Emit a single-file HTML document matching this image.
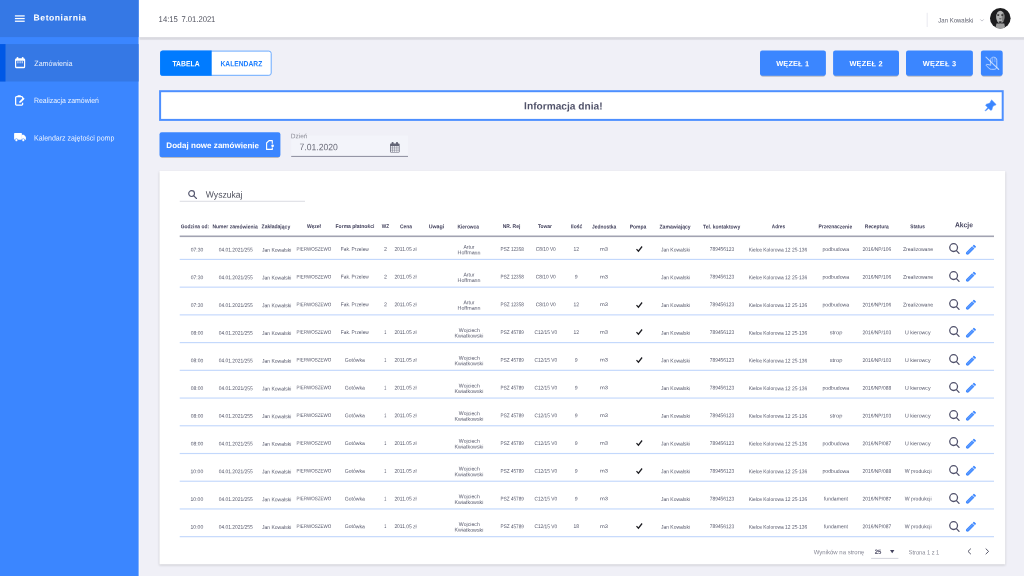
<!DOCTYPE html>
<html lang="pl">
<head>
<meta charset="utf-8">
<title>Betoniarnia</title>
<style>
*{box-sizing:border-box;margin:0;padding:0}
html,body{width:1024px;height:576px;overflow:hidden;background:#f0f0f7;font-family:"Liberation Sans",sans-serif}
.a{position:absolute}
.t{position:absolute;left:0;top:0;white-space:pre;line-height:1;transform-origin:0 0;font-family:"Liberation Sans",sans-serif}
svg{position:absolute;overflow:visible}
</style>
</head>
<body>
<!-- base geometry, drawn in SVG so fractional edges anti-alias like the (downscaled) reference -->
<svg style="left:0;top:0" width="1024" height="576" viewBox="0 0 1024 576">
  <defs>
    <linearGradient id="hs" x1="0" y1="0" x2="0" y2="1">
      <stop offset="0" stop-color="#000" stop-opacity=".105"/>
      <stop offset=".6" stop-color="#000" stop-opacity=".09"/>
      <stop offset="1" stop-color="#000" stop-opacity="0"/>
    </linearGradient>
    <filter id="sb" x="-10%" y="-30%" width="120%" height="170%"><feGaussianBlur stdDeviation="0.7"/></filter>
    <filter id="cb" x="-5%" y="-5%" width="110%" height="110%"><feGaussianBlur stdDeviation="0.8"/></filter>
  </defs>
  <!-- header + shadow -->
  <rect x="138.6" y="37.1" width="885.4" height="3.500" fill="url(#hs)"/>
  <rect x="138.6" y="0" width="885.4" height="37.1" fill="#fff"/>
  <!-- sidebar -->
  <rect x="138.6" y="37.1" width="1.500" height="538.9" fill="#fff" opacity=".35"/>
  <rect x="0" y="0" width="138.6" height="576" fill="#3b86ff"/>
  <rect x="0" y="0" width="138.6" height="37.1" fill="#3578e5"/>
  <rect x="0" y="44.1" width="138.6" height="37.4" fill="#3578e5"/>
  <rect x="0" y="44.1" width="5.500" height="37.4" fill="#0058e6"/>
  <!-- hamburger -->
  <rect x="14.9" y="15.3" width="9.800" height="1.250" fill="#fff"/>
  <rect x="14.9" y="17.950" width="9.800" height="1.250" fill="#fff"/>
  <rect x="14.9" y="20.600" width="9.800" height="1.250" fill="#fff"/>
  <!-- header divider -->
  <rect x="926.700" y="12.800" width=".9" height="14.200" fill="#e6e6ee"/>
  <!-- toggle -->
  <rect x="160.600" y="51.100" width="110.600" height="24.200" rx="2.300" fill="#fff" stroke="#6aaaff" stroke-width="1"/>
  <path d="M162.700 50.600h49v25.200h-49a2.600 2.600 0 0 1-2.600-2.600v-20a2.600 2.600 0 0 1 2.600-2.600z" fill="#007bff"/>
  <!-- wezel buttons (+ soft shadows) -->
  <g filter="url(#sb)" fill="#000" opacity=".22">
    <rect x="760.800" y="54" width="64.300" height="22.700" rx="2"/>
    <rect x="833.900" y="54" width="64.300" height="22.700" rx="2"/>
    <rect x="906.800" y="54" width="65.300" height="22.700" rx="2"/>
    <rect x="981.700" y="54" width="20.200" height="22.700" rx="2"/>
    <rect x="160.300" y="136" width="119.300" height="22" rx="2"/>
  </g>
  <g fill="#3b86ff">
    <rect x="760" y="50.600" width="65.900" height="25.200" rx="2.200"/>
    <rect x="833.100" y="50.600" width="65.900" height="25.200" rx="2.200"/>
    <rect x="906" y="50.600" width="66.900" height="25.200" rx="2.200"/>
    <rect x="980.900" y="50.600" width="21.800" height="25.200" rx="2.200"/>
    <rect x="159.500" y="132.300" width="120.900" height="24.800" rx="2.200"/>
  </g>
  <!-- banner -->
  <rect x="160.100" y="91.200" width="842.600" height="28.700" fill="#fff" stroke="#4d8fff" stroke-width="2"/>
  <!-- date field -->
  <rect x="291.200" y="135.600" width="116.800" height="20.400" fill="#f3f4fa"/>
  <rect x="291.200" y="155.900" width="116.800" height="1" fill="#8b8c9d"/>
  <!-- card -->
  <rect x="159.200" y="171.800" width="846.200" height="393.600" fill="#000" opacity=".15" filter="url(#cb)"/>
  <rect x="159.500" y="170.900" width="845.700" height="393.400" fill="#fff"/>
  <!-- search underline -->
  <rect x="179.700" y="200.800" width="125.300" height=".9" fill="#d6d7df"/>
  <!-- table head line -->
  <rect x="179.700" y="235.500" width="814.300" height="1.600" fill="#a2a3b2"/>
  <rect x="179.700" y="258.85" width="814.300" height="1.150" fill="#c3d8fc"/>
  <rect x="179.700" y="286.58" width="814.300" height="1.150" fill="#c3d8fc"/>
  <rect x="179.700" y="314.30" width="814.300" height="1.150" fill="#c3d8fc"/>
  <rect x="179.700" y="342.03" width="814.300" height="1.150" fill="#c3d8fc"/>
  <rect x="179.700" y="369.75" width="814.300" height="1.150" fill="#c3d8fc"/>
  <rect x="179.700" y="397.48" width="814.300" height="1.150" fill="#c3d8fc"/>
  <rect x="179.700" y="425.20" width="814.300" height="1.150" fill="#c3d8fc"/>
  <rect x="179.700" y="452.93" width="814.300" height="1.150" fill="#c3d8fc"/>
  <rect x="179.700" y="480.65" width="814.300" height="1.150" fill="#c3d8fc"/>
  <rect x="179.700" y="508.38" width="814.300" height="1.150" fill="#c3d8fc"/>
  <rect x="179.700" y="536.10" width="814.300" height="1.150" fill="#c3d8fc"/>
  <!-- footer select underline -->
  <rect x="871.100" y="557.900" width="27.300" height=".9" fill="#cfd0d9"/>
</svg>

<!-- sidebar icons -->
<svg style="left:14.8px;top:57.2px" width="10.2" height="11.2" viewBox="0 0 20 22">
  <path d="M3 2.600h14a3 3 0 0 1 3 3v13.400a3 3 0 0 1-3 3H3a3 3 0 0 1-3-3V5.600a3 3 0 0 1 3-3z" fill="#fff"/>
  <rect x="2.300" y="7.200" width="15.400" height="12" rx=".6" fill="#3578e5"/>
  <rect x="3.400" y="0" width="3" height="5" rx="1.200" fill="#fff"/>
  <rect x="13.600" y="0" width="3" height="5" rx="1.200" fill="#fff"/>
  <rect x="4.600" y="8.200" width="2.300" height="4.200" fill="#fff" opacity=".75"/>
  <rect x="8.850" y="8.200" width="2.300" height="4.200" fill="#fff" opacity=".75"/>
  <rect x="13.100" y="8.200" width="2.300" height="4.200" fill="#fff" opacity=".75"/>
</svg>
<svg style="left:14.8px;top:94.9px" width="10" height="10.8" viewBox="0 0 20 21.6">
  <path d="M15.2 7.4V5.200a1.800 1.800 0 0 0-1.800-1.800H3.100a1.800 1.800 0 0 0-1.800 1.800v13.300a1.800 1.800 0 0 0 1.800 1.800h10.300a1.800 1.800 0 0 0 1.800-1.800v-3" fill="none" stroke="#fff" stroke-width="2.500"/>
  <rect x="4.800" y="0.400" width="7" height="3.800" rx="1.200" fill="#fff"/>
  <path d="M8.400 15.800l.8-3.400 7.400-7.400 2.700 2.700-7.400 7.400z" fill="#fff"/>
</svg>
<svg style="left:13.9px;top:133.300px" width="12" height="8.800" viewBox="0 0 24 17.600">
  <rect x="0.200" y="0" width="15.600" height="13.400" rx="1.400" fill="#fff"/>
  <path d="M15.800 3.400h4.200l3.800 4.400v5.600h-8z" fill="#fff"/>
  <circle cx="4.800" cy="14.200" r="2.900" fill="#fff" stroke="#3b86ff" stroke-width="1.100"/>
  <circle cx="18.600" cy="14.200" r="2.900" fill="#fff" stroke="#3b86ff" stroke-width="1.100"/>
</svg>

<!-- header right -->
<svg style="left:979.6px;top:19.1px" width="4" height="2.6" viewBox="0 0 8 5.2"><path d="M.6.8L4 4.2 7.4.8" fill="none" stroke="#a4a5b3" stroke-width="1.3"/></svg>
<svg style="left:990.4px;top:8.2px" width="20.6" height="20.6" viewBox="0 0 41.2 41.2">
  <defs><clipPath id="av"><circle cx="20.6" cy="20.6" r="20.6"/></clipPath>
  <filter id="bl" x="-30%" y="-30%" width="160%" height="160%"><feGaussianBlur stdDeviation="1.250"/></filter></defs>
  <circle cx="20.6" cy="20.6" r="20.6" fill="#1d1d1f"/>
  <g clip-path="url(#av)"><g filter="url(#bl)">
    <path d="M13 31h15.500l2.500 12H10z" fill="#9c9c9c"/>
    <ellipse cx="20.600" cy="18" rx="8.300" ry="12.600" fill="#b2b2b2"/>
    <ellipse cx="26.200" cy="19" rx="2.600" ry="9" fill="#6a6a6a" opacity=".7"/>
    <ellipse cx="16.400" cy="14.200" rx="2.400" ry="1.600" fill="#2c2c2c"/>
    <ellipse cx="24.400" cy="14.200" rx="2.400" ry="1.600" fill="#2c2c2c"/>
    <ellipse cx="20.600" cy="21.600" rx="2.600" ry="1.400" fill="#6d6d6d"/>
    <ellipse cx="20.600" cy="28.200" rx="3.400" ry="1.700" fill="#2a2a2a"/>
  </g></g>
</svg>

<!-- hand icon -->
<svg style="left:0;top:0" width="1024" height="576" viewBox="0 0 1024 576" fill="none" stroke="#fff" stroke-linecap="round" stroke-linejoin="round">
  <g opacity=".62" stroke-width="1">
    <path d="M990.700 64.300V59.600c0-1.500 1.200-2.400 2.700-2.400h.4c1.700 0 3 1.300 3 3V66.800c0 1.600-1.100 2.500-2.700 2.500h-2.800c-.9 0-1.600-.3-2.300-1l-2.700-2.600c-.6-.7-.1-1.500.8-1.300l3.600 .7"/>
    <path d="M992.700 58v3.800M994.900 58.200v3.600" opacity=".55"/>
  </g>
  <path d="M986 57.100L998.800 69.500" stroke-width="1.050" opacity=".66"/>
</svg>
<!-- pin -->
<svg style="left:0;top:0" width="1024" height="576" viewBox="0 0 1024 576"><path d="M991.67 100.10 L996.00 104.43 L994.90 105.54 L990.56 101.20zM991.15 101.79 L994.31 104.95 L992.51 107.12 L991.92 109.47 L991.24 110.26 L990.67 110.28 L985.82 105.43 L985.84 104.86 L986.63 104.18 L988.98 103.59zM987.88 107.48 L988.62 108.22 L985.57 110.90 L985.20 110.53z" fill="#3b86ff" stroke="#3b86ff" stroke-width=".6" stroke-linejoin="round"/></svg>
<!-- file icon -->
<svg style="left:265.9px;top:140.1px" width="7.8" height="10" viewBox="0 0 15.600 20" fill="none" stroke="#fff" stroke-width="2.200" stroke-linejoin="round">
  <path d="M12.600 7.600V1.200H6L1.200 6v12.800h11.400v-3.600"/>
  <circle cx="13.200" cy="11.600" r="2.700" fill="#fff" stroke="none"/>
</svg>
<!-- date calendar icon -->
<svg style="left:390.4px;top:141.800px" width="9.600" height="10.600" viewBox="0 0 19.200 21.200">
  <rect x="0" y="3" width="19.200" height="18.200" rx="2" fill="#646576"/>
  <rect x="3.200" y="0" width="4" height="6" rx="1.600" fill="#646576"/>
  <rect x="12" y="0" width="4" height="6" rx="1.600" fill="#646576"/>
  <g fill="#f4f5fa"><rect x="1.50" y="8.20" width="3.450" height="3.300"/><rect x="5.75" y="8.20" width="3.450" height="3.300"/><rect x="10.00" y="8.20" width="3.450" height="3.300"/><rect x="14.25" y="8.20" width="3.450" height="3.300"/><rect x="1.50" y="12.40" width="3.450" height="3.300"/><rect x="5.75" y="12.40" width="3.450" height="3.300"/><rect x="10.00" y="12.40" width="3.450" height="3.300"/><rect x="14.25" y="12.40" width="3.450" height="3.300"/><rect x="1.50" y="16.60" width="3.450" height="3.300"/><rect x="5.75" y="16.60" width="3.450" height="3.300"/><rect x="10.00" y="16.60" width="3.450" height="3.300"/><rect x="14.25" y="16.60" width="3.450" height="3.300"/></g>
</svg>
<!-- search -->
<svg style="left:188.2px;top:189.9px" width="9.2" height="9.2" viewBox="0 0 18.400 18.400" fill="none" stroke="#55576f" stroke-width="2.300" stroke-linecap="round"><circle cx="7.200" cy="7.200" r="5.800"/><path d="M11.600 11.600l5.400 5.400"/></svg>
<svg style="left:949.4px;top:243.30px" width="11" height="11.4" viewBox="0 0 22.4 23.2" fill="none" stroke="#50516b" stroke-width="2.600" stroke-linecap="round"><circle cx="9.4" cy="9.4" r="7.9"/><path d="M15.2 15.4l5.300 5.700"/></svg>
<svg style="left:965.3px;top:244.60px" width="10.6" height="10.8" viewBox="0 0 21.2 21.6"><g transform="translate(10.6 10.8) rotate(45)"><rect x="-3.2" y="-13.4" width="6.4" height="3.600" rx="1.200" fill="#3b86ff"/><path d="M-3.200 -8.600h6.400v16.400c0 1.800-1.400 3.300-3.200 3.300s-3.200-1.500-3.200-3.300z" fill="#3b86ff"/><path d="M-1 -8.600v17M1 -8.600v17" stroke="#9cc2ff" stroke-width=".7" fill="none"/></g></svg>
<svg style="left:949.4px;top:271.03px" width="11" height="11.4" viewBox="0 0 22.4 23.2" fill="none" stroke="#50516b" stroke-width="2.600" stroke-linecap="round"><circle cx="9.4" cy="9.4" r="7.9"/><path d="M15.2 15.4l5.300 5.700"/></svg>
<svg style="left:965.3px;top:272.33px" width="10.6" height="10.8" viewBox="0 0 21.2 21.6"><g transform="translate(10.6 10.8) rotate(45)"><rect x="-3.2" y="-13.4" width="6.4" height="3.600" rx="1.200" fill="#3b86ff"/><path d="M-3.200 -8.600h6.400v16.400c0 1.800-1.400 3.300-3.200 3.300s-3.200-1.500-3.200-3.300z" fill="#3b86ff"/><path d="M-1 -8.600v17M1 -8.600v17" stroke="#9cc2ff" stroke-width=".7" fill="none"/></g></svg>
<svg style="left:949.4px;top:298.75px" width="11" height="11.4" viewBox="0 0 22.4 23.2" fill="none" stroke="#50516b" stroke-width="2.600" stroke-linecap="round"><circle cx="9.4" cy="9.4" r="7.9"/><path d="M15.2 15.4l5.300 5.700"/></svg>
<svg style="left:965.3px;top:300.05px" width="10.6" height="10.8" viewBox="0 0 21.2 21.6"><g transform="translate(10.6 10.8) rotate(45)"><rect x="-3.2" y="-13.4" width="6.4" height="3.600" rx="1.200" fill="#3b86ff"/><path d="M-3.200 -8.600h6.400v16.400c0 1.800-1.400 3.300-3.200 3.300s-3.200-1.500-3.200-3.300z" fill="#3b86ff"/><path d="M-1 -8.600v17M1 -8.600v17" stroke="#9cc2ff" stroke-width=".7" fill="none"/></g></svg>
<svg style="left:949.4px;top:326.48px" width="11" height="11.4" viewBox="0 0 22.4 23.2" fill="none" stroke="#50516b" stroke-width="2.600" stroke-linecap="round"><circle cx="9.4" cy="9.4" r="7.9"/><path d="M15.2 15.4l5.300 5.700"/></svg>
<svg style="left:965.3px;top:327.78px" width="10.6" height="10.8" viewBox="0 0 21.2 21.6"><g transform="translate(10.6 10.8) rotate(45)"><rect x="-3.2" y="-13.4" width="6.4" height="3.600" rx="1.200" fill="#3b86ff"/><path d="M-3.200 -8.600h6.400v16.400c0 1.800-1.400 3.300-3.200 3.300s-3.200-1.500-3.200-3.300z" fill="#3b86ff"/><path d="M-1 -8.600v17M1 -8.600v17" stroke="#9cc2ff" stroke-width=".7" fill="none"/></g></svg>
<svg style="left:949.4px;top:354.20px" width="11" height="11.4" viewBox="0 0 22.4 23.2" fill="none" stroke="#50516b" stroke-width="2.600" stroke-linecap="round"><circle cx="9.4" cy="9.4" r="7.9"/><path d="M15.2 15.4l5.300 5.700"/></svg>
<svg style="left:965.3px;top:355.50px" width="10.6" height="10.8" viewBox="0 0 21.2 21.6"><g transform="translate(10.6 10.8) rotate(45)"><rect x="-3.2" y="-13.4" width="6.4" height="3.600" rx="1.200" fill="#3b86ff"/><path d="M-3.200 -8.600h6.400v16.400c0 1.800-1.400 3.300-3.200 3.300s-3.200-1.500-3.200-3.300z" fill="#3b86ff"/><path d="M-1 -8.600v17M1 -8.600v17" stroke="#9cc2ff" stroke-width=".7" fill="none"/></g></svg>
<svg style="left:949.4px;top:381.93px" width="11" height="11.4" viewBox="0 0 22.4 23.2" fill="none" stroke="#50516b" stroke-width="2.600" stroke-linecap="round"><circle cx="9.4" cy="9.4" r="7.9"/><path d="M15.2 15.4l5.300 5.700"/></svg>
<svg style="left:965.3px;top:383.23px" width="10.6" height="10.8" viewBox="0 0 21.2 21.6"><g transform="translate(10.6 10.8) rotate(45)"><rect x="-3.2" y="-13.4" width="6.4" height="3.600" rx="1.200" fill="#3b86ff"/><path d="M-3.200 -8.600h6.400v16.400c0 1.800-1.400 3.300-3.200 3.300s-3.200-1.500-3.200-3.300z" fill="#3b86ff"/><path d="M-1 -8.600v17M1 -8.600v17" stroke="#9cc2ff" stroke-width=".7" fill="none"/></g></svg>
<svg style="left:949.4px;top:409.65px" width="11" height="11.4" viewBox="0 0 22.4 23.2" fill="none" stroke="#50516b" stroke-width="2.600" stroke-linecap="round"><circle cx="9.4" cy="9.4" r="7.9"/><path d="M15.2 15.4l5.300 5.700"/></svg>
<svg style="left:965.3px;top:410.95px" width="10.6" height="10.8" viewBox="0 0 21.2 21.6"><g transform="translate(10.6 10.8) rotate(45)"><rect x="-3.2" y="-13.4" width="6.4" height="3.600" rx="1.200" fill="#3b86ff"/><path d="M-3.200 -8.600h6.400v16.400c0 1.800-1.400 3.300-3.200 3.300s-3.200-1.500-3.200-3.300z" fill="#3b86ff"/><path d="M-1 -8.600v17M1 -8.600v17" stroke="#9cc2ff" stroke-width=".7" fill="none"/></g></svg>
<svg style="left:949.4px;top:437.38px" width="11" height="11.4" viewBox="0 0 22.4 23.2" fill="none" stroke="#50516b" stroke-width="2.600" stroke-linecap="round"><circle cx="9.4" cy="9.4" r="7.9"/><path d="M15.2 15.4l5.300 5.700"/></svg>
<svg style="left:965.3px;top:438.68px" width="10.6" height="10.8" viewBox="0 0 21.2 21.6"><g transform="translate(10.6 10.8) rotate(45)"><rect x="-3.2" y="-13.4" width="6.4" height="3.600" rx="1.200" fill="#3b86ff"/><path d="M-3.200 -8.600h6.400v16.400c0 1.800-1.400 3.300-3.200 3.300s-3.200-1.500-3.200-3.300z" fill="#3b86ff"/><path d="M-1 -8.600v17M1 -8.600v17" stroke="#9cc2ff" stroke-width=".7" fill="none"/></g></svg>
<svg style="left:949.4px;top:465.10px" width="11" height="11.4" viewBox="0 0 22.4 23.2" fill="none" stroke="#50516b" stroke-width="2.600" stroke-linecap="round"><circle cx="9.4" cy="9.4" r="7.9"/><path d="M15.2 15.4l5.300 5.700"/></svg>
<svg style="left:965.3px;top:466.40px" width="10.6" height="10.8" viewBox="0 0 21.2 21.6"><g transform="translate(10.6 10.8) rotate(45)"><rect x="-3.2" y="-13.4" width="6.4" height="3.600" rx="1.200" fill="#3b86ff"/><path d="M-3.200 -8.600h6.400v16.400c0 1.800-1.400 3.300-3.200 3.300s-3.200-1.500-3.200-3.300z" fill="#3b86ff"/><path d="M-1 -8.600v17M1 -8.600v17" stroke="#9cc2ff" stroke-width=".7" fill="none"/></g></svg>
<svg style="left:949.4px;top:492.83px" width="11" height="11.4" viewBox="0 0 22.4 23.2" fill="none" stroke="#50516b" stroke-width="2.600" stroke-linecap="round"><circle cx="9.4" cy="9.4" r="7.9"/><path d="M15.2 15.4l5.300 5.700"/></svg>
<svg style="left:965.3px;top:494.13px" width="10.6" height="10.8" viewBox="0 0 21.2 21.6"><g transform="translate(10.6 10.8) rotate(45)"><rect x="-3.2" y="-13.4" width="6.4" height="3.600" rx="1.200" fill="#3b86ff"/><path d="M-3.200 -8.600h6.400v16.400c0 1.800-1.400 3.300-3.200 3.300s-3.200-1.500-3.200-3.300z" fill="#3b86ff"/><path d="M-1 -8.600v17M1 -8.600v17" stroke="#9cc2ff" stroke-width=".7" fill="none"/></g></svg>
<svg style="left:949.4px;top:520.55px" width="11" height="11.4" viewBox="0 0 22.4 23.2" fill="none" stroke="#50516b" stroke-width="2.600" stroke-linecap="round"><circle cx="9.4" cy="9.4" r="7.9"/><path d="M15.2 15.4l5.300 5.700"/></svg>
<svg style="left:965.3px;top:521.85px" width="10.6" height="10.8" viewBox="0 0 21.2 21.6"><g transform="translate(10.6 10.8) rotate(45)"><rect x="-3.2" y="-13.4" width="6.4" height="3.600" rx="1.200" fill="#3b86ff"/><path d="M-3.200 -8.600h6.400v16.400c0 1.800-1.400 3.300-3.200 3.300s-3.200-1.500-3.200-3.300z" fill="#3b86ff"/><path d="M-1 -8.600v17M1 -8.600v17" stroke="#9cc2ff" stroke-width=".7" fill="none"/></g></svg>
<svg style="left:635.7px;top:246.10px" width="6.600" height="5.900" viewBox="0 0 13.200 11.800"><path d="M1 6.400l3.800 4L12.200 1" fill="none" stroke="#1d1d22" stroke-width="2.500"/></svg>
<svg style="left:635.7px;top:301.55px" width="6.600" height="5.900" viewBox="0 0 13.200 11.800"><path d="M1 6.400l3.800 4L12.200 1" fill="none" stroke="#1d1d22" stroke-width="2.500"/></svg>
<svg style="left:635.7px;top:329.27px" width="6.600" height="5.900" viewBox="0 0 13.200 11.800"><path d="M1 6.400l3.800 4L12.200 1" fill="none" stroke="#1d1d22" stroke-width="2.500"/></svg>
<svg style="left:635.7px;top:357.00px" width="6.600" height="5.900" viewBox="0 0 13.200 11.800"><path d="M1 6.400l3.800 4L12.200 1" fill="none" stroke="#1d1d22" stroke-width="2.500"/></svg>
<svg style="left:635.7px;top:440.18px" width="6.600" height="5.900" viewBox="0 0 13.200 11.800"><path d="M1 6.400l3.800 4L12.200 1" fill="none" stroke="#1d1d22" stroke-width="2.500"/></svg>
<svg style="left:635.7px;top:467.90px" width="6.600" height="5.900" viewBox="0 0 13.200 11.800"><path d="M1 6.400l3.800 4L12.200 1" fill="none" stroke="#1d1d22" stroke-width="2.500"/></svg>
<svg style="left:635.7px;top:523.35px" width="6.600" height="5.900" viewBox="0 0 13.200 11.800"><path d="M1 6.400l3.800 4L12.200 1" fill="none" stroke="#1d1d22" stroke-width="2.500"/></svg>
<!-- footer -->
<svg style="left:890.2px;top:550.100px" width="4.400" height="3.400" viewBox="0 0 9.200 6.800"><path d="M0 0h9.200L4.600 6.800z" fill="#43425d"/></svg>
<svg style="left:966.8px;top:548.4px" width="4.600" height="6.800" viewBox="0 0 9.200 13.600"><path d="M7.800 1.200L2 6.800l5.800 5.600" fill="none" stroke="#555668" stroke-width="2"/></svg>
<svg style="left:985.400px;top:548.4px" width="4.600" height="6.800" viewBox="0 0 9.200 13.600"><path d="M1.400 1.200l5.800 5.600-5.800 5.600" fill="none" stroke="#555668" stroke-width="2"/></svg>

<div class="a" id="tl" style="left:0;top:0;width:1024px;height:576px;will-change:transform;filter:blur(.3px)">
<span class="t" style="font-size:8.6px;font-weight:700;color:#ffffff;letter-spacing:0.524px;transform:translate(33.62px,13.51px) rotate(0.1deg) ;">Betoniarnia</span>
<span class="t" style="font-size:7.6px;font-weight:400;color:#ffffff;transform:translate(34.38px,59.96px) rotate(0.1deg) scaleX(0.9285);opacity:0.9;">Zamówienia</span>
<span class="t" style="font-size:7.6px;font-weight:400;color:#ffffff;transform:translate(34.03px,96.96px) rotate(0.1deg) scaleX(0.9097);opacity:0.9;">Realizacja zamówień</span>
<span class="t" style="font-size:7.6px;font-weight:400;color:#ffffff;transform:translate(34.02px,134.46px) rotate(0.1deg) scaleX(0.9241);opacity:0.9;">Kalendarz zajętości pomp</span>
<span class="t" style="font-size:8.3px;font-weight:400;color:#4d4f5c;transform:translate(158.62px,15.01px) rotate(0.1deg) scaleX(0.9249);">14:15</span>
<span class="t" style="font-size:8.3px;font-weight:400;color:#4d4f5c;transform:translate(181.51px,15.01px) rotate(0.1deg) scaleX(0.9171);">7.01.2021</span>
<span class="t" style="font-size:6.5px;font-weight:400;color:#5e606e;transform:translate(938.31px,17.57px) rotate(0.1deg) scaleX(0.9252);">Jan Kowalski</span>
<span class="t" style="font-size:7.6px;font-weight:700;color:#ffffff;transform:translate(172.42px,60.16px) rotate(0.1deg) scaleX(0.8982);">TABELA</span>
<span class="t" style="font-size:7.6px;font-weight:700;color:#1a7dff;transform:translate(220.45px,60.16px) rotate(0.1deg) scaleX(0.8856);">KALENDARZ</span>
<span class="t" style="font-size:7.4px;font-weight:700;color:#ffffff;letter-spacing:0.114px;transform:translate(776.29px,60.09px) rotate(0.1deg) ;">WĘZEŁ 1</span>
<span class="t" style="font-size:7.4px;font-weight:700;color:#ffffff;letter-spacing:0.195px;transform:translate(849.39px,60.09px) rotate(0.1deg) ;">WĘZEŁ 2</span>
<span class="t" style="font-size:7.4px;font-weight:700;color:#ffffff;letter-spacing:0.224px;transform:translate(922.79px,60.09px) rotate(0.1deg) ;">WĘZEŁ 3</span>
<span class="t" style="font-size:10.2px;font-weight:700;color:#51536a;transform:translate(524.12px,101.37px) rotate(0.1deg) scaleX(0.9970);">Informacja dnia!</span>
<span class="t" style="font-size:8px;font-weight:700;color:#ffffff;letter-spacing:0.035px;transform:translate(166.36px,142.00px) rotate(0.1deg) ;">Dodaj nowe zamówienie</span>
<span class="t" style="font-size:6.6px;font-weight:400;color:#8e8e99;transform:translate(290.77px,133.31px) rotate(0.1deg) scaleX(0.9873);">Dzień</span>
<span class="t" style="font-size:9.2px;font-weight:400;color:#6a6b78;transform:translate(299.56px,143.12px) rotate(0.1deg) scaleX(0.9365);">7.01.2020</span>
<span class="t" style="font-size:9.2px;font-weight:400;color:#4d4f5c;transform:translate(205.86px,190.62px) rotate(0.1deg) scaleX(0.9333);">Wyszukaj</span>
<span class="t" style="font-size:5.4px;font-weight:700;color:#43425d;transform:translate(180.80px,224.14px) rotate(0.1deg) scaleX(0.9074);">Godzina od:</span>
<span class="t" style="font-size:5.4px;font-weight:700;color:#43425d;transform:translate(212.46px,224.34px) rotate(0.1deg) scaleX(0.9275);">Numer zamówienia</span>
<span class="t" style="font-size:5.4px;font-weight:700;color:#43425d;transform:translate(261.55px,224.34px) rotate(0.1deg) scaleX(0.9379);">Zakładający</span>
<span class="t" style="font-size:5.4px;font-weight:700;color:#43425d;transform:translate(306.90px,223.89px) rotate(0.1deg) scaleX(0.9190);">Węzeł</span>
<span class="t" style="font-size:5.4px;font-weight:700;color:#43425d;transform:translate(335.56px,223.89px) rotate(0.1deg) scaleX(0.9316);">Forma płatności</span>
<span class="t" style="font-size:5.4px;font-weight:700;color:#43425d;transform:translate(381.70px,223.89px) rotate(0.1deg) scaleX(0.8749);">WZ</span>
<span class="t" style="font-size:5.4px;font-weight:700;color:#43425d;transform:translate(400.00px,224.34px) rotate(0.1deg) scaleX(0.9000);">Cena</span>
<span class="t" style="font-size:5.4px;font-weight:700;color:#43425d;transform:translate(428.68px,224.34px) rotate(0.1deg) scaleX(0.9823);">Uwagi</span>
<span class="t" style="font-size:5.4px;font-weight:700;color:#43425d;transform:translate(457.48px,224.54px) rotate(0.1deg) scaleX(0.8967);">Kierowca</span>
<span class="t" style="font-size:5.4px;font-weight:700;color:#43425d;transform:translate(502.67px,223.89px) rotate(0.1deg) scaleX(0.9224);">NR. Rej</span>
<span class="t" style="font-size:5.4px;font-weight:700;color:#43425d;transform:translate(537.95px,223.89px) rotate(0.1deg) scaleX(0.9060);">Towar</span>
<span class="t" style="font-size:5.4px;font-weight:700;color:#43425d;transform:translate(570.97px,224.34px) rotate(0.1deg) scaleX(0.9255);">Ilość</span>
<span class="t" style="font-size:5.4px;font-weight:700;color:#43425d;transform:translate(592.13px,224.54px) rotate(0.1deg) scaleX(0.9052);">Jednostka</span>
<span class="t" style="font-size:5.4px;font-weight:700;color:#43425d;transform:translate(629.67px,224.54px) rotate(0.1deg) scaleX(0.9231);">Pompa</span>
<span class="t" style="font-size:5.4px;font-weight:700;color:#43425d;transform:translate(659.55px,224.54px) rotate(0.1deg) scaleX(0.9342);">Zamawiający</span>
<span class="t" style="font-size:5.4px;font-weight:700;color:#43425d;transform:translate(703.04px,224.54px) rotate(0.1deg) scaleX(0.9310);">Tel. kontaktowy</span>
<span class="t" style="font-size:5.4px;font-weight:700;color:#43425d;transform:translate(771.78px,224.34px) rotate(0.1deg) scaleX(0.8643);">Adres</span>
<span class="t" style="font-size:5.4px;font-weight:700;color:#43425d;transform:translate(818.47px,224.34px) rotate(0.1deg) scaleX(0.9143);">Przeznaczenie</span>
<span class="t" style="font-size:5.4px;font-weight:700;color:#43425d;transform:translate(864.87px,224.34px) rotate(0.1deg) scaleX(0.9060);">Receptura</span>
<span class="t" style="font-size:5.4px;font-weight:700;color:#43425d;transform:translate(910.36px,224.34px) rotate(0.1deg) scaleX(0.8816);">Status</span>
<span class="t" style="font-size:7.2px;font-weight:700;color:#43425d;transform:translate(955.03px,221.32px) rotate(0.1deg) scaleX(0.9327);">Akcje</span>
<span class="t" style="font-size:5.3px;font-weight:400;color:#55576a;transform:translate(190.76px,247.45px) rotate(0.1deg) scaleX(0.9415);">07:30</span>
<span class="t" style="font-size:5.3px;font-weight:400;color:#55576a;transform:translate(218.71px,247.45px) rotate(0.1deg) scaleX(0.9231);">04.01.2021/255</span>
<span class="t" style="font-size:5.3px;font-weight:400;color:#55576a;transform:translate(261.92px,247.75px) rotate(0.1deg) scaleX(0.9514);">Jan Kowalski</span>
<span class="t" style="font-size:5.2px;font-weight:400;color:#55576a;transform:translate(296.43px,246.67px) rotate(0.1deg) scaleX(0.8704);">PIERWOSZEWO</span>
<span class="t" style="font-size:5.3px;font-weight:400;color:#55576a;transform:translate(340.70px,246.85px) rotate(0.1deg) scaleX(0.9204);">Fak. Przelew</span>
<span class="t" style="font-size:5.3px;font-weight:400;color:#55576a;transform:translate(383.94px,246.85px) rotate(0.1deg) scaleX(0.9917);">2</span>
<span class="t" style="font-size:5.3px;font-weight:400;color:#55576a;transform:translate(394.40px,246.85px) rotate(0.1deg) scaleX(0.9216);">2011.05 zł</span>
<span class="t" style="font-size:5.3px;font-weight:400;color:#55576a;transform:translate(463.39px,244.75px) rotate(0.1deg) scaleX(0.9661);">Artur</span>
<span class="t" style="font-size:5.3px;font-weight:400;color:#55576a;transform:translate(457.56px,250.35px) rotate(0.1deg) scaleX(1.0047);">Hoffmann</span>
<span class="t" style="font-size:5.3px;font-weight:400;color:#55576a;transform:translate(500.57px,246.85px) rotate(0.1deg) scaleX(0.8781);">PSZ 12358</span>
<span class="t" style="font-size:5.3px;font-weight:400;color:#55576a;transform:translate(535.81px,246.85px) rotate(0.1deg) scaleX(0.9020);">C8/10 V0</span>
<span class="t" style="font-size:5.3px;font-weight:400;color:#55576a;transform:translate(573.47px,246.85px) rotate(0.1deg) scaleX(0.9358);">12</span>
<span class="t" style="font-size:5.0px;font-weight:400;color:#55576a;transform:translate(599.92px,246.65px) rotate(0.1deg) scaleX(1.1560);">m3</span>
<span class="t" style="font-size:5.3px;font-weight:400;color:#55576a;transform:translate(660.92px,247.45px) rotate(0.1deg) scaleX(0.9448);">Jan Kowalski</span>
<span class="t" style="font-size:5.3px;font-weight:400;color:#55576a;transform:translate(709.80px,246.85px) rotate(0.1deg) scaleX(0.9188);">789456123</span>
<span class="t" style="font-size:5.3px;font-weight:400;color:#55576a;transform:translate(748.65px,247.45px) rotate(0.1deg) scaleX(0.9243);">Kielce Kolorowa 12 25-136</span>
<span class="t" style="font-size:5.3px;font-weight:400;color:#55576a;transform:translate(822.42px,247.05px) rotate(0.1deg) scaleX(0.9791);">podbudowa</span>
<span class="t" style="font-size:5.3px;font-weight:400;color:#55576a;transform:translate(862.60px,247.05px) rotate(0.1deg) scaleX(0.9232);">2016/NP/106</span>
<span class="t" style="font-size:5.3px;font-weight:400;color:#55576a;transform:translate(902.99px,247.05px) rotate(0.1deg) scaleX(0.9546);">Zrealizowane</span>
<span class="t" style="font-size:5.3px;font-weight:400;color:#55576a;transform:translate(190.76px,275.18px) rotate(0.1deg) scaleX(0.9415);">07:30</span>
<span class="t" style="font-size:5.3px;font-weight:400;color:#55576a;transform:translate(218.71px,275.18px) rotate(0.1deg) scaleX(0.9231);">04.01.2021/255</span>
<span class="t" style="font-size:5.3px;font-weight:400;color:#55576a;transform:translate(261.92px,275.48px) rotate(0.1deg) scaleX(0.9514);">Jan Kowalski</span>
<span class="t" style="font-size:5.2px;font-weight:400;color:#55576a;transform:translate(296.43px,274.39px) rotate(0.1deg) scaleX(0.8704);">PIERWOSZEWO</span>
<span class="t" style="font-size:5.3px;font-weight:400;color:#55576a;transform:translate(340.70px,274.58px) rotate(0.1deg) scaleX(0.9204);">Fak. Przelew</span>
<span class="t" style="font-size:5.3px;font-weight:400;color:#55576a;transform:translate(383.94px,274.58px) rotate(0.1deg) scaleX(0.9917);">2</span>
<span class="t" style="font-size:5.3px;font-weight:400;color:#55576a;transform:translate(394.40px,274.58px) rotate(0.1deg) scaleX(0.9216);">2011.05 zł</span>
<span class="t" style="font-size:5.3px;font-weight:400;color:#55576a;transform:translate(463.39px,272.48px) rotate(0.1deg) scaleX(0.9661);">Artur</span>
<span class="t" style="font-size:5.3px;font-weight:400;color:#55576a;transform:translate(457.56px,278.08px) rotate(0.1deg) scaleX(1.0047);">Hoffmann</span>
<span class="t" style="font-size:5.3px;font-weight:400;color:#55576a;transform:translate(500.57px,274.58px) rotate(0.1deg) scaleX(0.8781);">PSZ 12358</span>
<span class="t" style="font-size:5.3px;font-weight:400;color:#55576a;transform:translate(535.81px,274.58px) rotate(0.1deg) scaleX(0.9020);">C8/10 V0</span>
<span class="t" style="font-size:5.3px;font-weight:400;color:#55576a;transform:translate(574.86px,274.58px) rotate(0.1deg) scaleX(0.9781);">9</span>
<span class="t" style="font-size:5.0px;font-weight:400;color:#55576a;transform:translate(599.92px,274.38px) rotate(0.1deg) scaleX(1.1560);">m3</span>
<span class="t" style="font-size:5.3px;font-weight:400;color:#55576a;transform:translate(660.92px,275.18px) rotate(0.1deg) scaleX(0.9448);">Jan Kowalski</span>
<span class="t" style="font-size:5.3px;font-weight:400;color:#55576a;transform:translate(709.80px,274.58px) rotate(0.1deg) scaleX(0.9188);">789456123</span>
<span class="t" style="font-size:5.3px;font-weight:400;color:#55576a;transform:translate(748.65px,275.18px) rotate(0.1deg) scaleX(0.9243);">Kielce Kolorowa 12 25-136</span>
<span class="t" style="font-size:5.3px;font-weight:400;color:#55576a;transform:translate(822.42px,274.78px) rotate(0.1deg) scaleX(0.9791);">podbudowa</span>
<span class="t" style="font-size:5.3px;font-weight:400;color:#55576a;transform:translate(862.60px,274.78px) rotate(0.1deg) scaleX(0.9232);">2016/NP/106</span>
<span class="t" style="font-size:5.3px;font-weight:400;color:#55576a;transform:translate(902.99px,274.78px) rotate(0.1deg) scaleX(0.9546);">Zrealizowane</span>
<span class="t" style="font-size:5.3px;font-weight:400;color:#55576a;transform:translate(190.76px,302.91px) rotate(0.1deg) scaleX(0.9415);">07:30</span>
<span class="t" style="font-size:5.3px;font-weight:400;color:#55576a;transform:translate(218.71px,302.91px) rotate(0.1deg) scaleX(0.9231);">04.01.2021/255</span>
<span class="t" style="font-size:5.3px;font-weight:400;color:#55576a;transform:translate(261.92px,303.21px) rotate(0.1deg) scaleX(0.9514);">Jan Kowalski</span>
<span class="t" style="font-size:5.2px;font-weight:400;color:#55576a;transform:translate(296.43px,302.12px) rotate(0.1deg) scaleX(0.8704);">PIERWOSZEWO</span>
<span class="t" style="font-size:5.3px;font-weight:400;color:#55576a;transform:translate(340.70px,302.31px) rotate(0.1deg) scaleX(0.9204);">Fak. Przelew</span>
<span class="t" style="font-size:5.3px;font-weight:400;color:#55576a;transform:translate(383.94px,302.31px) rotate(0.1deg) scaleX(0.9917);">2</span>
<span class="t" style="font-size:5.3px;font-weight:400;color:#55576a;transform:translate(394.40px,302.31px) rotate(0.1deg) scaleX(0.9216);">2011.05 zł</span>
<span class="t" style="font-size:5.3px;font-weight:400;color:#55576a;transform:translate(463.39px,300.21px) rotate(0.1deg) scaleX(0.9661);">Artur</span>
<span class="t" style="font-size:5.3px;font-weight:400;color:#55576a;transform:translate(457.56px,305.81px) rotate(0.1deg) scaleX(1.0047);">Hoffmann</span>
<span class="t" style="font-size:5.3px;font-weight:400;color:#55576a;transform:translate(500.57px,302.31px) rotate(0.1deg) scaleX(0.8781);">PSZ 12358</span>
<span class="t" style="font-size:5.3px;font-weight:400;color:#55576a;transform:translate(535.81px,302.31px) rotate(0.1deg) scaleX(0.9020);">C8/10 V0</span>
<span class="t" style="font-size:5.3px;font-weight:400;color:#55576a;transform:translate(573.47px,302.31px) rotate(0.1deg) scaleX(0.9358);">12</span>
<span class="t" style="font-size:5.0px;font-weight:400;color:#55576a;transform:translate(599.92px,302.10px) rotate(0.1deg) scaleX(1.1560);">m3</span>
<span class="t" style="font-size:5.3px;font-weight:400;color:#55576a;transform:translate(660.92px,302.91px) rotate(0.1deg) scaleX(0.9448);">Jan Kowalski</span>
<span class="t" style="font-size:5.3px;font-weight:400;color:#55576a;transform:translate(709.80px,302.31px) rotate(0.1deg) scaleX(0.9188);">789456123</span>
<span class="t" style="font-size:5.3px;font-weight:400;color:#55576a;transform:translate(748.65px,302.91px) rotate(0.1deg) scaleX(0.9243);">Kielce Kolorowa 12 25-136</span>
<span class="t" style="font-size:5.3px;font-weight:400;color:#55576a;transform:translate(822.42px,302.51px) rotate(0.1deg) scaleX(0.9791);">podbudowa</span>
<span class="t" style="font-size:5.3px;font-weight:400;color:#55576a;transform:translate(862.60px,302.51px) rotate(0.1deg) scaleX(0.9232);">2016/NP/106</span>
<span class="t" style="font-size:5.3px;font-weight:400;color:#55576a;transform:translate(902.99px,302.51px) rotate(0.1deg) scaleX(0.9546);">Zrealizowane</span>
<span class="t" style="font-size:5.3px;font-weight:400;color:#55576a;transform:translate(190.76px,330.63px) rotate(0.1deg) scaleX(0.9415);">08:00</span>
<span class="t" style="font-size:5.3px;font-weight:400;color:#55576a;transform:translate(218.71px,330.63px) rotate(0.1deg) scaleX(0.9231);">04.01.2021/255</span>
<span class="t" style="font-size:5.3px;font-weight:400;color:#55576a;transform:translate(261.92px,330.93px) rotate(0.1deg) scaleX(0.9514);">Jan Kowalski</span>
<span class="t" style="font-size:5.2px;font-weight:400;color:#55576a;transform:translate(296.43px,329.84px) rotate(0.1deg) scaleX(0.8704);">PIERWOSZEWO</span>
<span class="t" style="font-size:5.3px;font-weight:400;color:#55576a;transform:translate(340.70px,330.03px) rotate(0.1deg) scaleX(0.9204);">Fak. Przelew</span>
<span class="t" style="font-size:5.3px;font-weight:400;color:#55576a;transform:translate(384.32px,330.03px) rotate(0.1deg) scaleX(0.6985);">1</span>
<span class="t" style="font-size:5.3px;font-weight:400;color:#55576a;transform:translate(394.40px,330.03px) rotate(0.1deg) scaleX(0.9216);">2011.05 zł</span>
<span class="t" style="font-size:5.3px;font-weight:400;color:#55576a;transform:translate(458.88px,327.93px) rotate(0.1deg) scaleX(0.9791);">Wojciech</span>
<span class="t" style="font-size:5.3px;font-weight:400;color:#55576a;transform:translate(454.57px,333.53px) rotate(0.1deg) scaleX(0.9976);">Kwiatkowski</span>
<span class="t" style="font-size:5.3px;font-weight:400;color:#55576a;transform:translate(500.57px,330.03px) rotate(0.1deg) scaleX(0.8788);">PSZ 45789</span>
<span class="t" style="font-size:5.3px;font-weight:400;color:#55576a;transform:translate(534.41px,330.03px) rotate(0.1deg) scaleX(0.9082);">C12/15 V0</span>
<span class="t" style="font-size:5.3px;font-weight:400;color:#55576a;transform:translate(573.47px,330.03px) rotate(0.1deg) scaleX(0.9358);">12</span>
<span class="t" style="font-size:5.0px;font-weight:400;color:#55576a;transform:translate(599.92px,329.82px) rotate(0.1deg) scaleX(1.1560);">m3</span>
<span class="t" style="font-size:5.3px;font-weight:400;color:#55576a;transform:translate(660.92px,330.63px) rotate(0.1deg) scaleX(0.9448);">Jan Kowalski</span>
<span class="t" style="font-size:5.3px;font-weight:400;color:#55576a;transform:translate(709.80px,330.03px) rotate(0.1deg) scaleX(0.9188);">789456123</span>
<span class="t" style="font-size:5.3px;font-weight:400;color:#55576a;transform:translate(748.65px,330.63px) rotate(0.1deg) scaleX(0.9243);">Kielce Kolorowa 12 25-136</span>
<span class="t" style="font-size:5.3px;font-weight:400;color:#55576a;transform:translate(829.64px,330.23px) rotate(0.1deg) scaleX(1.0867);">strop</span>
<span class="t" style="font-size:5.3px;font-weight:400;color:#55576a;transform:translate(862.60px,330.23px) rotate(0.1deg) scaleX(0.9232);">2016/NP/103</span>
<span class="t" style="font-size:5.3px;font-weight:400;color:#55576a;transform:translate(905.00px,330.23px) rotate(0.1deg) scaleX(0.9887);">U kierowcy</span>
<span class="t" style="font-size:5.3px;font-weight:400;color:#55576a;transform:translate(190.76px,358.36px) rotate(0.1deg) scaleX(0.9415);">08:00</span>
<span class="t" style="font-size:5.3px;font-weight:400;color:#55576a;transform:translate(218.71px,358.36px) rotate(0.1deg) scaleX(0.9231);">04.01.2021/255</span>
<span class="t" style="font-size:5.3px;font-weight:400;color:#55576a;transform:translate(261.92px,358.66px) rotate(0.1deg) scaleX(0.9514);">Jan Kowalski</span>
<span class="t" style="font-size:5.2px;font-weight:400;color:#55576a;transform:translate(296.43px,357.57px) rotate(0.1deg) scaleX(0.8704);">PIERWOSZEWO</span>
<span class="t" style="font-size:5.3px;font-weight:400;color:#55576a;transform:translate(344.84px,357.75px) rotate(0.1deg) scaleX(0.9593);">Gotówka</span>
<span class="t" style="font-size:5.3px;font-weight:400;color:#55576a;transform:translate(384.32px,357.75px) rotate(0.1deg) scaleX(0.6985);">1</span>
<span class="t" style="font-size:5.3px;font-weight:400;color:#55576a;transform:translate(394.40px,357.75px) rotate(0.1deg) scaleX(0.9216);">2011.05 zł</span>
<span class="t" style="font-size:5.3px;font-weight:400;color:#55576a;transform:translate(458.88px,355.66px) rotate(0.1deg) scaleX(0.9791);">Wojciech</span>
<span class="t" style="font-size:5.3px;font-weight:400;color:#55576a;transform:translate(454.57px,361.25px) rotate(0.1deg) scaleX(0.9976);">Kwiatkowski</span>
<span class="t" style="font-size:5.3px;font-weight:400;color:#55576a;transform:translate(500.57px,357.75px) rotate(0.1deg) scaleX(0.8788);">PSZ 45789</span>
<span class="t" style="font-size:5.3px;font-weight:400;color:#55576a;transform:translate(534.41px,357.75px) rotate(0.1deg) scaleX(0.9082);">C12/15 V0</span>
<span class="t" style="font-size:5.3px;font-weight:400;color:#55576a;transform:translate(574.86px,357.75px) rotate(0.1deg) scaleX(0.9781);">9</span>
<span class="t" style="font-size:5.0px;font-weight:400;color:#55576a;transform:translate(599.92px,357.55px) rotate(0.1deg) scaleX(1.1560);">m3</span>
<span class="t" style="font-size:5.3px;font-weight:400;color:#55576a;transform:translate(660.92px,358.36px) rotate(0.1deg) scaleX(0.9448);">Jan Kowalski</span>
<span class="t" style="font-size:5.3px;font-weight:400;color:#55576a;transform:translate(709.80px,357.75px) rotate(0.1deg) scaleX(0.9188);">789456123</span>
<span class="t" style="font-size:5.3px;font-weight:400;color:#55576a;transform:translate(748.65px,358.36px) rotate(0.1deg) scaleX(0.9243);">Kielce Kolorowa 12 25-136</span>
<span class="t" style="font-size:5.3px;font-weight:400;color:#55576a;transform:translate(829.64px,357.96px) rotate(0.1deg) scaleX(1.0867);">strop</span>
<span class="t" style="font-size:5.3px;font-weight:400;color:#55576a;transform:translate(862.60px,357.96px) rotate(0.1deg) scaleX(0.9232);">2016/NP/103</span>
<span class="t" style="font-size:5.3px;font-weight:400;color:#55576a;transform:translate(905.00px,357.96px) rotate(0.1deg) scaleX(0.9887);">U kierowcy</span>
<span class="t" style="font-size:5.3px;font-weight:400;color:#55576a;transform:translate(190.76px,386.08px) rotate(0.1deg) scaleX(0.9415);">08:00</span>
<span class="t" style="font-size:5.3px;font-weight:400;color:#55576a;transform:translate(218.71px,386.08px) rotate(0.1deg) scaleX(0.9231);">04.01.2021/255</span>
<span class="t" style="font-size:5.3px;font-weight:400;color:#55576a;transform:translate(261.92px,386.38px) rotate(0.1deg) scaleX(0.9514);">Jan Kowalski</span>
<span class="t" style="font-size:5.2px;font-weight:400;color:#55576a;transform:translate(296.43px,385.30px) rotate(0.1deg) scaleX(0.8704);">PIERWOSZEWO</span>
<span class="t" style="font-size:5.3px;font-weight:400;color:#55576a;transform:translate(344.84px,385.48px) rotate(0.1deg) scaleX(0.9593);">Gotówka</span>
<span class="t" style="font-size:5.3px;font-weight:400;color:#55576a;transform:translate(384.32px,385.48px) rotate(0.1deg) scaleX(0.6985);">1</span>
<span class="t" style="font-size:5.3px;font-weight:400;color:#55576a;transform:translate(394.40px,385.48px) rotate(0.1deg) scaleX(0.9216);">2011.05 zł</span>
<span class="t" style="font-size:5.3px;font-weight:400;color:#55576a;transform:translate(458.88px,383.38px) rotate(0.1deg) scaleX(0.9791);">Wojciech</span>
<span class="t" style="font-size:5.3px;font-weight:400;color:#55576a;transform:translate(454.57px,388.98px) rotate(0.1deg) scaleX(0.9976);">Kwiatkowski</span>
<span class="t" style="font-size:5.3px;font-weight:400;color:#55576a;transform:translate(500.57px,385.48px) rotate(0.1deg) scaleX(0.8788);">PSZ 45789</span>
<span class="t" style="font-size:5.3px;font-weight:400;color:#55576a;transform:translate(534.41px,385.48px) rotate(0.1deg) scaleX(0.9082);">C12/15 V0</span>
<span class="t" style="font-size:5.3px;font-weight:400;color:#55576a;transform:translate(574.86px,385.48px) rotate(0.1deg) scaleX(0.9781);">9</span>
<span class="t" style="font-size:5.0px;font-weight:400;color:#55576a;transform:translate(599.92px,385.28px) rotate(0.1deg) scaleX(1.1560);">m3</span>
<span class="t" style="font-size:5.3px;font-weight:400;color:#55576a;transform:translate(660.92px,386.08px) rotate(0.1deg) scaleX(0.9448);">Jan Kowalski</span>
<span class="t" style="font-size:5.3px;font-weight:400;color:#55576a;transform:translate(709.80px,385.48px) rotate(0.1deg) scaleX(0.9188);">789456123</span>
<span class="t" style="font-size:5.3px;font-weight:400;color:#55576a;transform:translate(748.65px,386.08px) rotate(0.1deg) scaleX(0.9243);">Kielce Kolorowa 12 25-136</span>
<span class="t" style="font-size:5.3px;font-weight:400;color:#55576a;transform:translate(822.42px,385.68px) rotate(0.1deg) scaleX(0.9791);">podbudowa</span>
<span class="t" style="font-size:5.3px;font-weight:400;color:#55576a;transform:translate(862.60px,385.68px) rotate(0.1deg) scaleX(0.9231);">2016/NP/088</span>
<span class="t" style="font-size:5.3px;font-weight:400;color:#55576a;transform:translate(905.00px,385.68px) rotate(0.1deg) scaleX(0.9887);">U kierowcy</span>
<span class="t" style="font-size:5.3px;font-weight:400;color:#55576a;transform:translate(190.76px,413.81px) rotate(0.1deg) scaleX(0.9415);">08:00</span>
<span class="t" style="font-size:5.3px;font-weight:400;color:#55576a;transform:translate(218.71px,413.81px) rotate(0.1deg) scaleX(0.9231);">04.01.2021/255</span>
<span class="t" style="font-size:5.3px;font-weight:400;color:#55576a;transform:translate(261.92px,414.11px) rotate(0.1deg) scaleX(0.9514);">Jan Kowalski</span>
<span class="t" style="font-size:5.2px;font-weight:400;color:#55576a;transform:translate(296.43px,413.02px) rotate(0.1deg) scaleX(0.8704);">PIERWOSZEWO</span>
<span class="t" style="font-size:5.3px;font-weight:400;color:#55576a;transform:translate(344.84px,413.21px) rotate(0.1deg) scaleX(0.9593);">Gotówka</span>
<span class="t" style="font-size:5.3px;font-weight:400;color:#55576a;transform:translate(384.32px,413.21px) rotate(0.1deg) scaleX(0.6985);">1</span>
<span class="t" style="font-size:5.3px;font-weight:400;color:#55576a;transform:translate(394.40px,413.21px) rotate(0.1deg) scaleX(0.9216);">2011.05 zł</span>
<span class="t" style="font-size:5.3px;font-weight:400;color:#55576a;transform:translate(458.88px,411.11px) rotate(0.1deg) scaleX(0.9791);">Wojciech</span>
<span class="t" style="font-size:5.3px;font-weight:400;color:#55576a;transform:translate(454.57px,416.71px) rotate(0.1deg) scaleX(0.9976);">Kwiatkowski</span>
<span class="t" style="font-size:5.3px;font-weight:400;color:#55576a;transform:translate(500.57px,413.21px) rotate(0.1deg) scaleX(0.8788);">PSZ 45789</span>
<span class="t" style="font-size:5.3px;font-weight:400;color:#55576a;transform:translate(534.41px,413.21px) rotate(0.1deg) scaleX(0.9082);">C12/15 V0</span>
<span class="t" style="font-size:5.3px;font-weight:400;color:#55576a;transform:translate(574.86px,413.21px) rotate(0.1deg) scaleX(0.9781);">9</span>
<span class="t" style="font-size:5.0px;font-weight:400;color:#55576a;transform:translate(599.92px,413.00px) rotate(0.1deg) scaleX(1.1560);">m3</span>
<span class="t" style="font-size:5.3px;font-weight:400;color:#55576a;transform:translate(660.92px,413.81px) rotate(0.1deg) scaleX(0.9448);">Jan Kowalski</span>
<span class="t" style="font-size:5.3px;font-weight:400;color:#55576a;transform:translate(709.80px,413.21px) rotate(0.1deg) scaleX(0.9188);">789456123</span>
<span class="t" style="font-size:5.3px;font-weight:400;color:#55576a;transform:translate(748.65px,413.81px) rotate(0.1deg) scaleX(0.9243);">Kielce Kolorowa 12 25-136</span>
<span class="t" style="font-size:5.3px;font-weight:400;color:#55576a;transform:translate(829.64px,413.41px) rotate(0.1deg) scaleX(1.0867);">strop</span>
<span class="t" style="font-size:5.3px;font-weight:400;color:#55576a;transform:translate(862.60px,413.41px) rotate(0.1deg) scaleX(0.9232);">2016/NP/103</span>
<span class="t" style="font-size:5.3px;font-weight:400;color:#55576a;transform:translate(905.00px,413.41px) rotate(0.1deg) scaleX(0.9887);">U kierowcy</span>
<span class="t" style="font-size:5.3px;font-weight:400;color:#55576a;transform:translate(190.76px,441.53px) rotate(0.1deg) scaleX(0.9415);">08:00</span>
<span class="t" style="font-size:5.3px;font-weight:400;color:#55576a;transform:translate(218.71px,441.53px) rotate(0.1deg) scaleX(0.9231);">04.01.2021/255</span>
<span class="t" style="font-size:5.3px;font-weight:400;color:#55576a;transform:translate(261.92px,441.83px) rotate(0.1deg) scaleX(0.9514);">Jan Kowalski</span>
<span class="t" style="font-size:5.2px;font-weight:400;color:#55576a;transform:translate(296.43px,440.75px) rotate(0.1deg) scaleX(0.8704);">PIERWOSZEWO</span>
<span class="t" style="font-size:5.3px;font-weight:400;color:#55576a;transform:translate(344.84px,440.93px) rotate(0.1deg) scaleX(0.9593);">Gotówka</span>
<span class="t" style="font-size:5.3px;font-weight:400;color:#55576a;transform:translate(384.32px,440.93px) rotate(0.1deg) scaleX(0.6985);">1</span>
<span class="t" style="font-size:5.3px;font-weight:400;color:#55576a;transform:translate(394.40px,440.93px) rotate(0.1deg) scaleX(0.9216);">2011.05 zł</span>
<span class="t" style="font-size:5.3px;font-weight:400;color:#55576a;transform:translate(458.88px,438.83px) rotate(0.1deg) scaleX(0.9791);">Wojciech</span>
<span class="t" style="font-size:5.3px;font-weight:400;color:#55576a;transform:translate(454.57px,444.43px) rotate(0.1deg) scaleX(0.9976);">Kwiatkowski</span>
<span class="t" style="font-size:5.3px;font-weight:400;color:#55576a;transform:translate(500.57px,440.93px) rotate(0.1deg) scaleX(0.8788);">PSZ 45789</span>
<span class="t" style="font-size:5.3px;font-weight:400;color:#55576a;transform:translate(534.41px,440.93px) rotate(0.1deg) scaleX(0.9082);">C12/15 V0</span>
<span class="t" style="font-size:5.3px;font-weight:400;color:#55576a;transform:translate(574.86px,440.93px) rotate(0.1deg) scaleX(0.9781);">9</span>
<span class="t" style="font-size:5.0px;font-weight:400;color:#55576a;transform:translate(599.92px,440.73px) rotate(0.1deg) scaleX(1.1560);">m3</span>
<span class="t" style="font-size:5.3px;font-weight:400;color:#55576a;transform:translate(660.92px,441.53px) rotate(0.1deg) scaleX(0.9448);">Jan Kowalski</span>
<span class="t" style="font-size:5.3px;font-weight:400;color:#55576a;transform:translate(709.80px,440.93px) rotate(0.1deg) scaleX(0.9188);">789456123</span>
<span class="t" style="font-size:5.3px;font-weight:400;color:#55576a;transform:translate(748.65px,441.53px) rotate(0.1deg) scaleX(0.9243);">Kielce Kolorowa 12 25-136</span>
<span class="t" style="font-size:5.3px;font-weight:400;color:#55576a;transform:translate(822.42px,441.13px) rotate(0.1deg) scaleX(0.9791);">podbudowa</span>
<span class="t" style="font-size:5.3px;font-weight:400;color:#55576a;transform:translate(862.60px,441.13px) rotate(0.1deg) scaleX(0.9242);">2016/NP/087</span>
<span class="t" style="font-size:5.3px;font-weight:400;color:#55576a;transform:translate(905.00px,441.13px) rotate(0.1deg) scaleX(0.9887);">U kierowcy</span>
<span class="t" style="font-size:5.3px;font-weight:400;color:#55576a;transform:translate(190.56px,469.25px) rotate(0.1deg) scaleX(0.9562);">10:00</span>
<span class="t" style="font-size:5.3px;font-weight:400;color:#55576a;transform:translate(218.71px,469.25px) rotate(0.1deg) scaleX(0.9231);">04.01.2021/255</span>
<span class="t" style="font-size:5.3px;font-weight:400;color:#55576a;transform:translate(261.92px,469.56px) rotate(0.1deg) scaleX(0.9514);">Jan Kowalski</span>
<span class="t" style="font-size:5.2px;font-weight:400;color:#55576a;transform:translate(296.43px,468.47px) rotate(0.1deg) scaleX(0.8704);">PIERWOSZEWO</span>
<span class="t" style="font-size:5.3px;font-weight:400;color:#55576a;transform:translate(344.84px,468.65px) rotate(0.1deg) scaleX(0.9593);">Gotówka</span>
<span class="t" style="font-size:5.3px;font-weight:400;color:#55576a;transform:translate(384.32px,468.65px) rotate(0.1deg) scaleX(0.6985);">1</span>
<span class="t" style="font-size:5.3px;font-weight:400;color:#55576a;transform:translate(394.40px,468.65px) rotate(0.1deg) scaleX(0.9216);">2011.05 zł</span>
<span class="t" style="font-size:5.3px;font-weight:400;color:#55576a;transform:translate(458.88px,466.56px) rotate(0.1deg) scaleX(0.9791);">Wojciech</span>
<span class="t" style="font-size:5.3px;font-weight:400;color:#55576a;transform:translate(454.57px,472.15px) rotate(0.1deg) scaleX(0.9976);">Kwiatkowski</span>
<span class="t" style="font-size:5.3px;font-weight:400;color:#55576a;transform:translate(500.57px,468.65px) rotate(0.1deg) scaleX(0.8788);">PSZ 45789</span>
<span class="t" style="font-size:5.3px;font-weight:400;color:#55576a;transform:translate(534.41px,468.65px) rotate(0.1deg) scaleX(0.9082);">C12/15 V0</span>
<span class="t" style="font-size:5.3px;font-weight:400;color:#55576a;transform:translate(574.86px,468.65px) rotate(0.1deg) scaleX(0.9781);">9</span>
<span class="t" style="font-size:5.0px;font-weight:400;color:#55576a;transform:translate(599.92px,468.45px) rotate(0.1deg) scaleX(1.1560);">m3</span>
<span class="t" style="font-size:5.3px;font-weight:400;color:#55576a;transform:translate(660.92px,469.25px) rotate(0.1deg) scaleX(0.9448);">Jan Kowalski</span>
<span class="t" style="font-size:5.3px;font-weight:400;color:#55576a;transform:translate(709.80px,468.65px) rotate(0.1deg) scaleX(0.9188);">789456123</span>
<span class="t" style="font-size:5.3px;font-weight:400;color:#55576a;transform:translate(748.65px,469.25px) rotate(0.1deg) scaleX(0.9243);">Kielce Kolorowa 12 25-136</span>
<span class="t" style="font-size:5.3px;font-weight:400;color:#55576a;transform:translate(822.42px,468.86px) rotate(0.1deg) scaleX(0.9791);">podbudowa</span>
<span class="t" style="font-size:5.3px;font-weight:400;color:#55576a;transform:translate(862.60px,468.86px) rotate(0.1deg) scaleX(0.9231);">2016/NP/088</span>
<span class="t" style="font-size:5.3px;font-weight:400;color:#55576a;transform:translate(904.78px,468.86px) rotate(0.1deg) scaleX(0.9673);">W produkcji</span>
<span class="t" style="font-size:5.3px;font-weight:400;color:#55576a;transform:translate(190.56px,496.98px) rotate(0.1deg) scaleX(0.9562);">10:00</span>
<span class="t" style="font-size:5.3px;font-weight:400;color:#55576a;transform:translate(218.71px,496.98px) rotate(0.1deg) scaleX(0.9231);">04.01.2021/255</span>
<span class="t" style="font-size:5.3px;font-weight:400;color:#55576a;transform:translate(261.92px,497.28px) rotate(0.1deg) scaleX(0.9514);">Jan Kowalski</span>
<span class="t" style="font-size:5.2px;font-weight:400;color:#55576a;transform:translate(296.43px,496.19px) rotate(0.1deg) scaleX(0.8704);">PIERWOSZEWO</span>
<span class="t" style="font-size:5.3px;font-weight:400;color:#55576a;transform:translate(344.84px,496.38px) rotate(0.1deg) scaleX(0.9593);">Gotówka</span>
<span class="t" style="font-size:5.3px;font-weight:400;color:#55576a;transform:translate(384.32px,496.38px) rotate(0.1deg) scaleX(0.6985);">1</span>
<span class="t" style="font-size:5.3px;font-weight:400;color:#55576a;transform:translate(394.40px,496.38px) rotate(0.1deg) scaleX(0.9216);">2011.05 zł</span>
<span class="t" style="font-size:5.3px;font-weight:400;color:#55576a;transform:translate(458.88px,494.28px) rotate(0.1deg) scaleX(0.9791);">Wojciech</span>
<span class="t" style="font-size:5.3px;font-weight:400;color:#55576a;transform:translate(454.57px,499.88px) rotate(0.1deg) scaleX(0.9976);">Kwiatkowski</span>
<span class="t" style="font-size:5.3px;font-weight:400;color:#55576a;transform:translate(500.57px,496.38px) rotate(0.1deg) scaleX(0.8788);">PSZ 45789</span>
<span class="t" style="font-size:5.3px;font-weight:400;color:#55576a;transform:translate(534.41px,496.38px) rotate(0.1deg) scaleX(0.9082);">C12/15 V0</span>
<span class="t" style="font-size:5.3px;font-weight:400;color:#55576a;transform:translate(574.86px,496.38px) rotate(0.1deg) scaleX(0.9781);">9</span>
<span class="t" style="font-size:5.0px;font-weight:400;color:#55576a;transform:translate(599.92px,496.18px) rotate(0.1deg) scaleX(1.1560);">m3</span>
<span class="t" style="font-size:5.3px;font-weight:400;color:#55576a;transform:translate(660.92px,496.98px) rotate(0.1deg) scaleX(0.9448);">Jan Kowalski</span>
<span class="t" style="font-size:5.3px;font-weight:400;color:#55576a;transform:translate(709.80px,496.38px) rotate(0.1deg) scaleX(0.9188);">789456123</span>
<span class="t" style="font-size:5.3px;font-weight:400;color:#55576a;transform:translate(748.65px,496.98px) rotate(0.1deg) scaleX(0.9243);">Kielce Kolorowa 12 25-136</span>
<span class="t" style="font-size:5.3px;font-weight:400;color:#55576a;transform:translate(823.93px,496.58px) rotate(0.1deg) scaleX(0.9632);">fundament</span>
<span class="t" style="font-size:5.3px;font-weight:400;color:#55576a;transform:translate(862.60px,496.58px) rotate(0.1deg) scaleX(0.9242);">2016/NP/087</span>
<span class="t" style="font-size:5.3px;font-weight:400;color:#55576a;transform:translate(904.78px,496.58px) rotate(0.1deg) scaleX(0.9673);">W produkcji</span>
<span class="t" style="font-size:5.3px;font-weight:400;color:#55576a;transform:translate(190.56px,524.71px) rotate(0.1deg) scaleX(0.9562);">10:00</span>
<span class="t" style="font-size:5.3px;font-weight:400;color:#55576a;transform:translate(218.71px,524.71px) rotate(0.1deg) scaleX(0.9231);">04.01.2021/255</span>
<span class="t" style="font-size:5.3px;font-weight:400;color:#55576a;transform:translate(261.92px,525.00px) rotate(0.1deg) scaleX(0.9514);">Jan Kowalski</span>
<span class="t" style="font-size:5.2px;font-weight:400;color:#55576a;transform:translate(296.43px,523.92px) rotate(0.1deg) scaleX(0.8704);">PIERWOSZEWO</span>
<span class="t" style="font-size:5.3px;font-weight:400;color:#55576a;transform:translate(344.84px,524.11px) rotate(0.1deg) scaleX(0.9593);">Gotówka</span>
<span class="t" style="font-size:5.3px;font-weight:400;color:#55576a;transform:translate(384.32px,524.11px) rotate(0.1deg) scaleX(0.6985);">1</span>
<span class="t" style="font-size:5.3px;font-weight:400;color:#55576a;transform:translate(394.40px,524.11px) rotate(0.1deg) scaleX(0.9216);">2011.05 zł</span>
<span class="t" style="font-size:5.3px;font-weight:400;color:#55576a;transform:translate(458.88px,522.00px) rotate(0.1deg) scaleX(0.9791);">Wojciech</span>
<span class="t" style="font-size:5.3px;font-weight:400;color:#55576a;transform:translate(454.57px,527.61px) rotate(0.1deg) scaleX(0.9976);">Kwiatkowski</span>
<span class="t" style="font-size:5.3px;font-weight:400;color:#55576a;transform:translate(500.57px,524.11px) rotate(0.1deg) scaleX(0.8788);">PSZ 45789</span>
<span class="t" style="font-size:5.3px;font-weight:400;color:#55576a;transform:translate(534.41px,524.11px) rotate(0.1deg) scaleX(0.9082);">C12/15 V0</span>
<span class="t" style="font-size:5.3px;font-weight:400;color:#55576a;transform:translate(573.47px,524.11px) rotate(0.1deg) scaleX(0.9294);">18</span>
<span class="t" style="font-size:5.0px;font-weight:400;color:#55576a;transform:translate(599.92px,523.90px) rotate(0.1deg) scaleX(1.1560);">m3</span>
<span class="t" style="font-size:5.3px;font-weight:400;color:#55576a;transform:translate(660.92px,524.71px) rotate(0.1deg) scaleX(0.9448);">Jan Kowalski</span>
<span class="t" style="font-size:5.3px;font-weight:400;color:#55576a;transform:translate(709.80px,524.11px) rotate(0.1deg) scaleX(0.9188);">789456123</span>
<span class="t" style="font-size:5.3px;font-weight:400;color:#55576a;transform:translate(748.65px,524.71px) rotate(0.1deg) scaleX(0.9243);">Kielce Kolorowa 12 25-136</span>
<span class="t" style="font-size:5.3px;font-weight:400;color:#55576a;transform:translate(823.93px,524.31px) rotate(0.1deg) scaleX(0.9632);">fundament</span>
<span class="t" style="font-size:5.3px;font-weight:400;color:#55576a;transform:translate(862.60px,524.31px) rotate(0.1deg) scaleX(0.9242);">2016/NP/087</span>
<span class="t" style="font-size:5.3px;font-weight:400;color:#55576a;transform:translate(904.78px,524.31px) rotate(0.1deg) scaleX(0.9673);">W produkcji</span>
<span class="t" style="font-size:6.2px;font-weight:400;color:#878895;transform:translate(813.77px,549.27px) rotate(0.1deg) scaleX(0.9689);">Wyników na stronę</span>
<span class="t" style="font-size:6.0px;font-weight:700;color:#43425d;transform:translate(874.79px,548.80px) rotate(0.1deg) scaleX(0.9980);">25</span>
<span class="t" style="font-size:6.2px;font-weight:400;color:#878895;transform:translate(908.64px,549.37px) rotate(0.1deg) scaleX(0.9179);">Strona 1 z 1</span>
</div>
</body>
</html>
